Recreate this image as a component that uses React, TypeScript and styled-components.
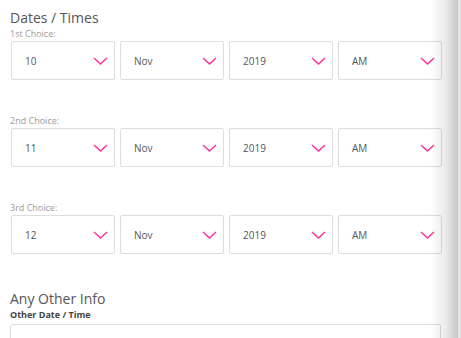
import React, { FC } from "react";
import styled, { createGlobalStyle } from "styled-components";

const GlobalStyle = createGlobalStyle`
  html, body {
    margin: 0;
    padding: 0;
    background: #ffffff;
    font-family: "Open Sans", "Liberation Sans", sans-serif;
    overflow: hidden;
  }
`;

const Page = styled("div")`
  position: relative;
  width: 461px;
  height: 338px;
  overflow: hidden;
  padding: 8px 20px 0 10px;
  box-sizing: border-box;
`;

const Heading = styled("h2")`
  margin: 0;
  font-size: 14px;
  line-height: 20px;
  font-weight: 400;
  color: #555555;
`;

const ChoiceLabel = styled("div")`
  font-size: 9px;
  line-height: 12px;
  color: #9a9a9a;
`;

const FieldLabel = styled("div")`
  font-size: 9px;
  line-height: 12px;
  font-weight: 700;
  color: #444444;
`;

const Choice = styled("div")`
  margin-bottom: 35px;
`;

const Row = styled("div")`
  display: grid;
  grid-template-columns: repeat(4, 104px);
  column-gap: 5px;
  margin-top: 1px;
  padding-left: 1px;
`;

const Select = styled("div")`
  height: 39px;
  box-sizing: border-box;
  border: 1px solid #dddddd;
  border-radius: 2px;
  display: flex;
  align-items: center;
  justify-content: space-between;
  padding: 0 6px 0 13px;
  font-size: 10px;
  color: #555555;
`;

const Chevron = styled("svg")`
  width: 15px;
  height: 8px;
  flex: none;
`;

const TextArea = styled("div")`
  margin-top: 3px;
  width: 431px;
  height: 40px;
  box-sizing: border-box;
  border: 1px solid #dddddd;
  border-radius: 2px;
`;

const Shadow = styled("div")`
  position: absolute;
  top: 0;
  right: 0;
  width: 31px;
  height: 100%;
  background: linear-gradient(
    to right,
    rgba(0, 0, 0, 0) 0%,
    rgba(0, 0, 0, 0.08) 50%,
    rgba(0, 0, 0, 0.22) 90%,
    rgba(0, 0, 0, 0.1) 91%,
    rgba(0, 0, 0, 0.1) 100%
  );
`;

interface SelectBoxProps {
  value: string;
}

const SelectBox: FC<SelectBoxProps> = ({ value }) => (
  <Select>
    <span>{value}</span>
    <Chevron viewBox="0 0 15 8">
      <path d="M1 1 L7.5 7 L14 1" fill="none" stroke="#ff2e9a" strokeWidth="1.4" />
    </Chevron>
  </Select>
);

const choices = [
  { label: "1st Choice:", day: "10" },
  { label: "2nd Choice:", day: "11" },
  { label: "3rd Choice:", day: "12" },
];

export default function App() {
  return (
    <>
      <GlobalStyle />
      <Page>
        <Heading>Dates / Times</Heading>
        {choices.map((c) => (
          <Choice key={c.label}>
            <ChoiceLabel>{c.label}</ChoiceLabel>
            <Row>
              <SelectBox value={c.day} />
              <SelectBox value="Nov" />
              <SelectBox value="2019" />
              <SelectBox value="AM" />
            </Row>
          </Choice>
        ))}
        <Heading>Any Other Info</Heading>
        <FieldLabel>Other Date / Time</FieldLabel>
        <TextArea />
        <Shadow />
      </Page>
    </>
  );
}
